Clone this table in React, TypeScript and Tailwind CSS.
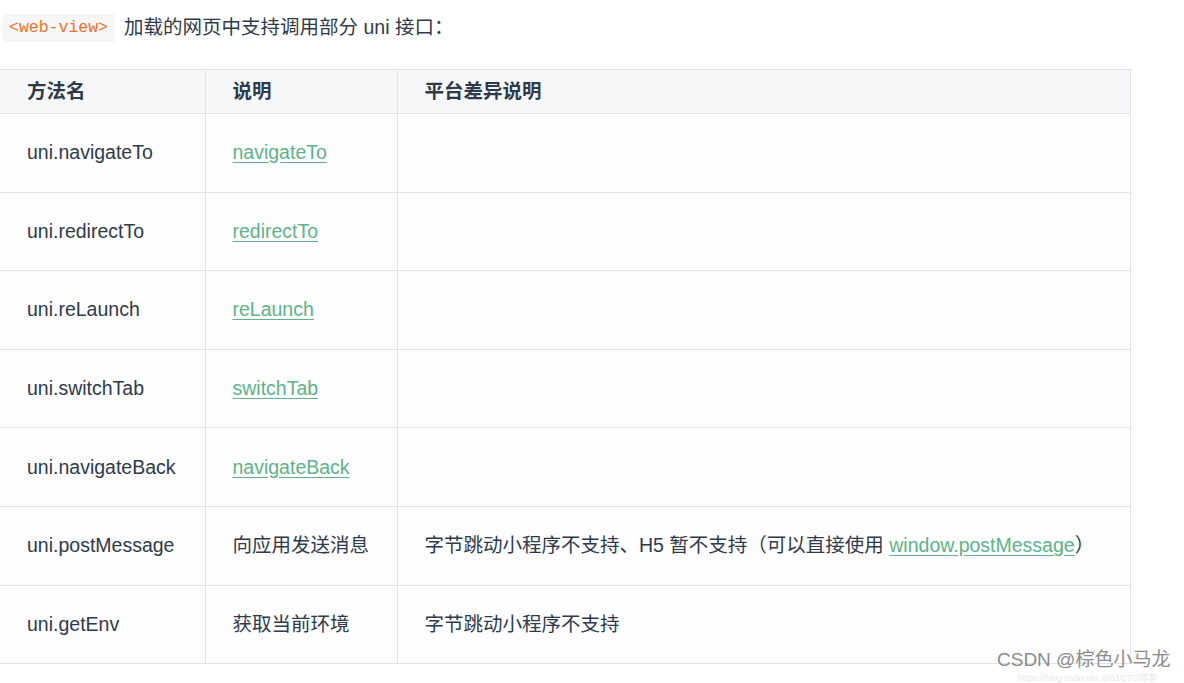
const rows: { name: string; desc: string; link?: boolean; note?: React.ReactNode }[] = [
  { name: "uni.navigateTo", desc: "navigateTo", link: true },
  { name: "uni.redirectTo", desc: "redirectTo", link: true },
  { name: "uni.reLaunch", desc: "reLaunch", link: true },
  { name: "uni.switchTab", desc: "switchTab", link: true },
  { name: "uni.navigateBack", desc: "navigateBack", link: true },
  {
    name: "uni.postMessage",
    desc: "向应用发送消息",
    note: (
      <>
        字节跳动小程序不支持、H5 暂不支持（可以直接使用{" "}
        <a className="text-[#5fb28a] underline underline-offset-[3px]">window.postMessage</a>）
      </>
    ),
  },
  { name: "uni.getEnv", desc: "获取当前环境", note: "字节跳动小程序不支持" },
]

export default function App() {
  return (
    <div
      className="relative w-[1184px] h-[683px] overflow-hidden bg-white text-[#2f3a4b]"
      style={{ fontFamily: '"Liberation Sans", "Noto Sans CJK SC", sans-serif' }}
    >
      <div className="flex items-center pt-[14px] pl-[2px] h-[42px]">
        <code className="h-[28px] flex items-center px-[7px] rounded-[3px] bg-[#f6f6f6] text-[#e2742f] text-[16.5px] font-['Liberation_Mono',monospace]">
          &lt;web-view&gt;
        </code>
        <span className="ml-[9px] text-[19.5px]">加载的网页中支持调用部分 uni 接口：</span>
      </div>

      <table className="mt-[27px] w-[1131px] border-collapse text-[19.5px] table-fixed">
        <colgroup>
          <col className="w-[205px]" />
          <col className="w-[192px]" />
          <col />
        </colgroup>
        <thead>
          <tr className="h-[44px] bg-[#f6f7f9]">
            <th className="border border-l-0 border-[#e1e2e6] pl-[27px] text-left font-bold">方法名</th>
            <th className="border border-[#e1e2e6] pl-[27px] text-left font-bold">说明</th>
            <th className="border border-[#e1e2e6] pl-[27px] text-left font-bold">平台差异说明</th>
          </tr>
        </thead>
        <tbody>
          {rows.map((r) => (
            <tr key={r.name} className="h-[78.6px] bg-[#fdfdfe]">
              <td className="border border-l-0 border-[#e1e2e6] pl-[27px]">{r.name}</td>
              <td className="border border-[#e1e2e6] pl-[27px]">
                {r.link ? (
                  <a className="text-[#5fb28a] underline underline-offset-[3px]">{r.desc}</a>
                ) : (
                  r.desc
                )}
              </td>
              <td className="border border-[#e1e2e6] pl-[27px]">{r.note}</td>
            </tr>
          ))}
        </tbody>
      </table>

      <div className="absolute left-[997px] top-[648px] text-[19px] leading-[24px] text-[#8c8c8c] whitespace-nowrap">
        CSDN @棕色小马龙
      </div>
      <div className="absolute left-[1018px] top-[673px] text-[9px] leading-[10px] text-[#e8e8e8] whitespace-nowrap">
        https://blog.csdn.net @51CTO博客
      </div>
    </div>
  )
}
